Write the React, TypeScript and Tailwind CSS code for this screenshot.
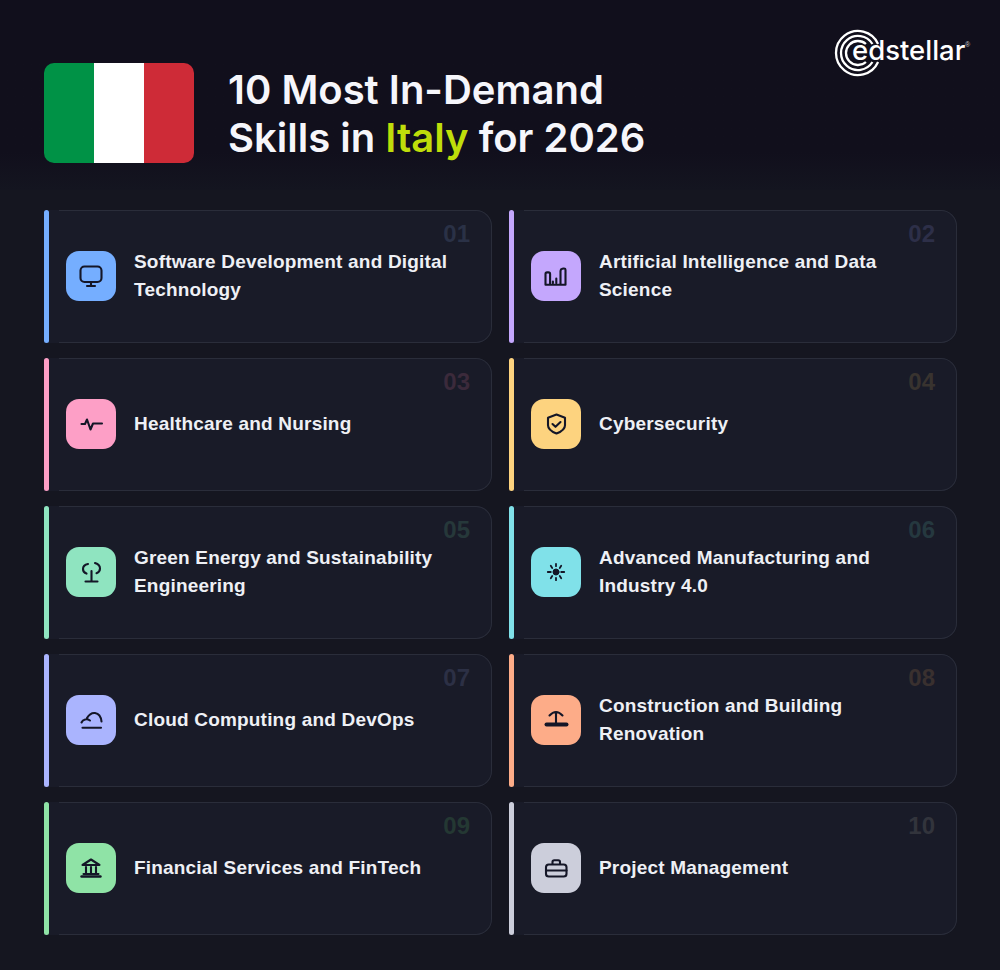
const ink = "#141627";

type Skill = { n: string; text: string[]; color: string; num: string; icon: React.ReactNode };

function Glyph({ children }: { children: React.ReactNode }) {
  return (
    <svg viewBox="0 0 50 50" width="50" height="50" fill="none" stroke={ink} strokeWidth="2.1" strokeLinecap="round" strokeLinejoin="round">
      {children}
    </svg>
  );
}

const skills: Skill[] = [
  {
    n: "01", text: ["Software Development and Digital", "Technology"], color: "bg-[#75aeff]", num: "text-[#2a3146]",
    icon: <Glyph><rect x="14.500" y="15.500" width="21" height="15.500" rx="4" /><path d="M25 31v3.500M21 35h8" /></Glyph>,
  },
  {
    n: "02", text: ["Artificial Intelligence and Data", "Science"], color: "bg-[#c4a7fd]", num: "text-[#2d2f48]",
    icon: <Glyph><path d="M14.500 33.800V23q0-1.600 1.600-1.600h1.400q1.600 0 1.600 1.600v10.800M14.500 33.800h20M29.500 33.800V20q0-1.800 1.800-2.200l1.400-.3q1.800-.2 1.800 1.800v14.500M25.300 32v-4.500M21.900 32v-1.500" /></Glyph>,
  },
  {
    n: "03", text: ["Healthcare and Nursing"], color: "bg-[#fd9fc6]", num: "text-[#3b2a3b]",
    icon: <Glyph><path d="M15.500 25h3.500l2-4.500 3.500 10 2.500-6h9" /></Glyph>,
  },
  {
    n: "04", text: ["Cybersecurity"], color: "bg-[#fdd37f]", num: "text-[#38332f]",
    icon: <Glyph><path d="M25.500 15.500l8.500 3.200v7.500c0 3.200-3.600 6.400-8.500 8.300-4.900-1.900-8.500-5.100-8.500-8.300v-7.500z" /><path d="M21.500 25l3 2.800 5-4.800" /></Glyph>,
  },
  {
    n: "05", text: ["Green Energy and Sustainability", "Engineering"], color: "bg-[#8fe4c0]", num: "text-[#26383a]",
    icon: <Glyph><path d="M22 17c-3 .6-5 2.600-5 5s1.500 4 3.500 4.600M29 16c3 1 5 3 5 5.500 0 2.300-1.500 4-3.500 4.700M25.500 24v10M19.500 34.500h12" /></Glyph>,
  },
  {
    n: "06", text: ["Advanced Manufacturing and", "Industry 4.0"], color: "bg-[#80e1e9]", num: "text-[#25383f]",
    icon: <Glyph><circle cx="25" cy="25" r="3" fill={ink} strokeWidth="1" /><path strokeWidth="1.800" d="M16.800 25h3M30.200 25h3M25 16.800v2.400M25 30.800v2.400M19.800 18.800l1.400 2.200M30.200 18.800l-1.400 2.200M19.800 31.200l1.400-2.200M30.200 31.200l-1.400-2.200" /></Glyph>,
  },
  {
    n: "07", text: ["Cloud Computing and DevOps"], color: "bg-[#aab4fe]", num: "text-[#2c3045]",
    icon: <Glyph><path d="M16.500 32.800h18.500" /><path d="M15.500 27.500c1.500-3.500 5.500-4 8.500-2M21 23c2-3.500 5-5.300 8-5 3.500.5 6 4 6.500 8.500" /></Glyph>,
  },
  {
    n: "08", text: ["Construction and Building", "Renovation"], color: "bg-[#fdac88]", num: "text-[#39302f]",
    icon: <Glyph><path d="M15.500 29.500h20" strokeWidth="4" /><path d="M25 17v12M18.500 20.500q6.500-7 13 0" /></Glyph>,
  },
  {
    n: "09", text: ["Financial Services and FinTech"], color: "bg-[#8fe3a6]", num: "text-[#243833]",
    icon: <Glyph><path d="M25 16.500l8.500 5.500h-17zM20 24v6.500M25 24v6.500M30 24v6.500M17.500 31h15" /><path d="M15.500 33.500h19" strokeWidth="2.400" /></Glyph>,
  },
  {
    n: "10", text: ["Project Management"], color: "bg-[#cccedb]", num: "text-[#32343c]",
    icon: <Glyph><rect x="15" y="21.500" width="20.500" height="12" rx="2.800" /><path d="M15 27.500h20.500M21.500 21v-2q0-1.800 1.800-1.800h3.900q1.800 0 1.800 1.800v2" /></Glyph>,
  },
];

function Logo() {
  const rings = [22, 17, 12];
  return (
    <div className="relative h-[48px] w-[136px]">
      <svg viewBox="0 0 50 48" width="50" height="48" fill="none" stroke="#ffffff" strokeWidth="2.300" className="absolute left-0 top-0">
        {rings.map((r) => {
          const gap = 9;
          const dx = Math.sqrt(r * r - gap * gap);
          return <path key={r} d={`M${24 + dx} ${24 - gap}A${r} ${r} 0 1 0 ${24 + dx} ${24 + gap}`} />;
        })}
      </svg>
      <span className="absolute left-[18px] top-[2px] text-[27.5px] font-medium leading-[38px] text-white [font-family:'Inter',sans-serif]">edstellar</span>
      <span className="absolute left-[131px] top-[12px] text-[7px] leading-[8px] text-[#c9c9c9] [font-family:'Liberation_Sans',sans-serif]">®</span>
    </div>
  );
}

function Card({ s }: { s: Skill }) {
  return (
    <div className="flex h-[133px] rounded-r-2xl bg-[#191b28]">
      <div className={`w-[5px] shrink-0 rounded-full ${s.color}`} />
      <div className="w-[10px] shrink-0" />
      <div className="relative flex min-w-0 flex-1 items-center gap-[18px] rounded-r-2xl border border-l-0 border-[#2a2d3a] pb-px pl-[7px]">
        <div className={`flex h-[50px] w-[50px] shrink-0 items-center justify-center rounded-[13px] ${s.color}`}>{s.icon}</div>
        <div className="text-[19px] font-bold leading-[28px] tracking-[0.19px] text-[#eef0f5] [font-family:'Liberation_Sans',sans-serif]">
          {s.text.map((t) => (
            <div key={t} className="whitespace-nowrap">{t}</div>
          ))}
        </div>
        <span className={`absolute right-[21px] top-[8px] text-[24px] font-bold leading-[30px] [font-family:'Liberation_Sans',sans-serif] ${s.num}`}>{s.n}</span>
      </div>
    </div>
  );
}

export default function App() {
  return (
    <div className="flex h-[970px] w-[1000px] flex-col bg-[#151620] [font-family:'Inter',sans-serif]">
      <header className="flex h-[190px] shrink-0 items-start bg-gradient-to-b from-[#110f1c] from-80% to-[#141520] pl-[44px] pr-[30px]">
        <div className="mt-[63px] flex h-[100px] w-[150px] shrink-0 overflow-hidden rounded-[10px]">
          <div className="flex-1 bg-[#009246]" />
          <div className="flex-1 bg-white" />
          <div className="flex-1 bg-[#ce2b37]" />
        </div>
        <h1 className="ml-[34px] mt-[66px] text-[40px] font-semibold leading-[48px] text-[#f6f6fb]">
          <div>10 Most In-Demand</div>
          <div>Skills in <span className="text-[#bfde0a]">Italy</span> for 2026</div>
        </h1>
        <div className="ml-auto mt-[29px]">
          <Logo />
        </div>
      </header>
      <main className="grid grid-cols-2 gap-x-[17px] gap-y-[15px] pl-[44px] pr-[43px] pt-[20px]">
        {skills.map((s) => (
          <Card key={s.n} s={s} />
        ))}
      </main>
    </div>
  );
}
